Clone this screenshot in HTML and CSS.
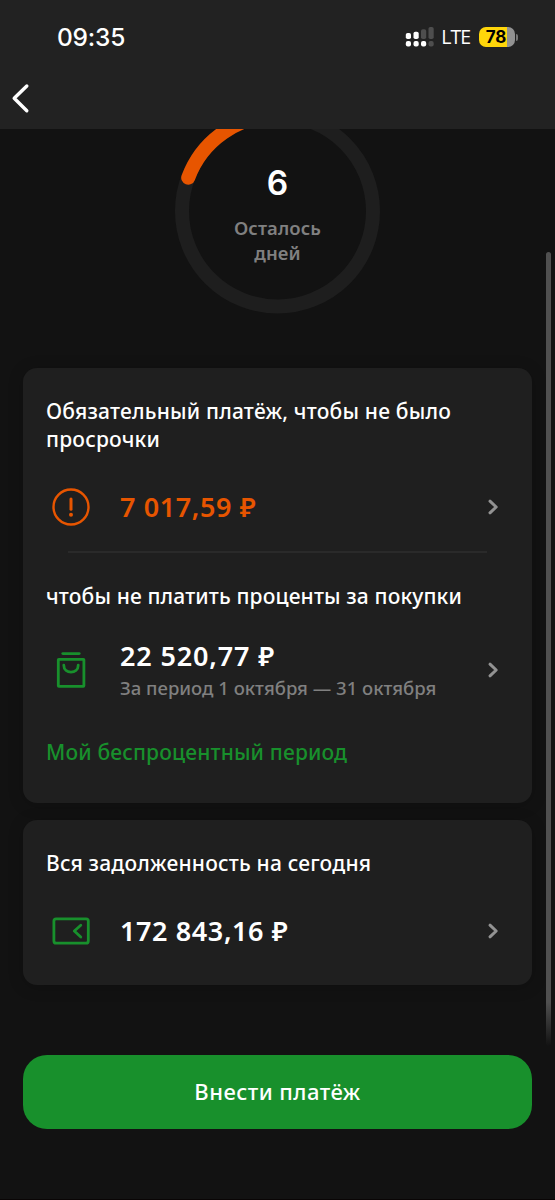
FILE: index.html
```html
<!DOCTYPE html>
<html lang="ru">
<head>
<meta charset="utf-8">
<title>Платёж по кредитной карте</title>
<link rel="stylesheet" href="styles.css">
</head>
<body>
<div class="screen">
  <header class="top">
    <div class="status">
      <span class="clock">09:35</span>
      <div class="indicators">
        <svg class="signal" width="29" height="20" viewBox="0 0 29 20">
          <g fill="#fff"><rect x="0.8" y="6" width="5.2" height="6" rx="1.8"/><rect x="8.5" y="4.7" width="5.2" height="7.3" rx="1.8"/><rect x="0.8" y="14" width="5.2" height="5.4" rx="2"/><rect x="8.5" y="14" width="5.2" height="5.4" rx="2"/><rect x="16" y="14" width="5.2" height="5.4" rx="2"/></g>
          <g fill="#4e4e4e"><rect x="16" y="2.2" width="5.2" height="9.8" rx="1.8"/><rect x="23.5" y="0" width="5.2" height="12" rx="1.8"/><rect x="23.5" y="14" width="5.2" height="5.4" rx="2"/></g>
        </svg>
        <span class="network">LTE</span>
        <span class="battery"><span class="level">78</span></span>
        <span class="battery-tip"></span>
      </div>
    </div>
    <svg class="back" width="20" height="32" viewBox="0 0 20 32"><path d="M15.8 4 3.2 16.3 15.8 28.8" fill="none" stroke="#fff" stroke-width="3.4" stroke-linecap="round" stroke-linejoin="round"/></svg>
  </header>

  <main class="content">
    <section class="dial">
      <svg class="ring" width="205" height="185" viewBox="0 20.5 205 185">
        <circle cx="102.5" cy="102.5" r="95.5" fill="none" stroke="#1e1e1e" stroke-width="14"/>
        <path d="M13.2 69.2A95.5 95.5 0 0 1 102.5 7" fill="none" stroke="#e75500" stroke-width="14" stroke-linecap="round"/>
      </svg>
      <div class="dial-label">
        <strong class="days">6</strong>
        <span class="left w-left">Осталось</span>
        <span class="left w-days">дней</span>
      </div>
    </section>

    <section class="card card-main">
      <h2 class="title"><span class="t1">Обязательный платёж, чтобы не было</span><br><span class="t2">просрочки</span></h2>
      <div class="row row-due">
        <svg class="icon" width="50" height="50" viewBox="0 0 50 50" fill="none" stroke="#e75500"><circle cx="25" cy="25" r="17.5" stroke-width="2.4"/><path d="M25 17V27.2" stroke-width="3" stroke-linecap="round"/><circle cx="25" cy="32.7" r="2" fill="#e75500" stroke="none"/></svg>
        <span class="amount due">7 017,59 ₽</span>
        <svg class="chevron" width="12" height="18" viewBox="0 0 12 18"><path d="M3 3.2 9.2 9 3 14.8" /></svg>
      </div>
      <div class="divider"></div>
      <h2 class="title t3">чтобы не платить проценты за покупки</h2>
      <div class="row row-period">
        <svg class="icon" width="50" height="50" viewBox="0 0 50 50" fill="none" stroke="#18902c" stroke-width="2.8"><path d="M16.8 8.6H33.2" stroke-linecap="round"/><rect x="12.3" y="14.3" width="25.6" height="27" rx="0.5"/><path d="M17.8 20.2C17.8 29.3 32.2 29.3 32.2 20.2" stroke-linecap="round"/></svg>
        <div class="stack">
          <span class="amount total">22 520,77 ₽</span>
          <span class="period">За период 1 октября — 31 октября</span>
        </div>
        <svg class="chevron" width="12" height="18" viewBox="0 0 12 18"><path d="M3 3.2 9.2 9 3 14.8"/></svg>
      </div>
      <a class="link">Мой беспроцентный период</a>
    </section>

    <section class="card card-debt">
      <h2 class="title t4">Вся задолженность на сегодня</h2>
      <div class="row row-debt">
        <svg class="icon" width="50" height="50" viewBox="0 0 50 50" fill="none" stroke="#18902c" stroke-width="2.8"><rect x="7.9" y="12.9" width="34.4" height="24.2" rx="2.2"/><path d="M34.8 19.2 28.3 25 34.8 31" stroke-linecap="round" stroke-linejoin="round"/></svg>
        <span class="amount debt">172 843,16 ₽</span>
        <svg class="chevron" width="12" height="18" viewBox="0 0 12 18"><path d="M3 3.2 9.2 9 3 14.8"/></svg>
      </div>
    </section>

    <button class="pay"><span class="pay-text">Внести платёж</span></button>
  </main>
  <div class="scrollbar"></div>
</div>
</body>
</html>
```
FILE: styles.css
```css
* { box-sizing: border-box; }
body { margin: 0; background: #121212; }
.screen {
  position: relative;
  width: 555px;
  height: 1200px;
  overflow: hidden;
  background: #121212;
  border-bottom: 1px solid #090505;
  color: #fff;
  font-family: "Noto Sans", sans-serif;
}
.top { height: 129px; background: #222; }
.status {
  display: flex;
  justify-content: space-between;
  align-items: center;
  height: 74px;
  padding: 0 37px 0 57px;
}
.clock { font: 500 24.5px/30px Inter, sans-serif; letter-spacing: -.2px; }
.indicators { display: flex; align-items: center; height: 20px; }
.network { margin-left: 7px; font: 500 19.5px/20px "Open Sans", sans-serif; letter-spacing: -1px; }
.battery {
  width: 36px;
  height: 20px;
  margin-left: 9px;
  border-radius: 7px;
  overflow: hidden;
  background: linear-gradient(90deg, #ffd60a 28px, #929292 28px);
}
.level { display: block; width: 34px; color: #000; font: 700 17px/20px Inter, sans-serif; text-align: center; }
.battery-tip { width: 2px; height: 7px; margin-left: 1px; border-radius: 0 3px 3px 0; background: #777; }
.back { display: block; margin: 8px 0 0 11px; }
.content { display: flex; flex-direction: column; padding: 0 23px; }
.dial { display: grid; justify-items: center; height: 185px; }
.ring, .dial-label { grid-area: 1 / 1; }
.dial-label { display: flex; flex-direction: column; align-items: center; padding-top: 30px; }
.days { font: 600 33.5px/48px Inter, sans-serif; }
.left { color: #808080; font-size: 18.5px; line-height: 26px; font-weight: 600; letter-spacing: .1px; }
.w-left { margin-top: 8px; }
.w-days { margin-top: -1px; }
.card {
  border-radius: 14px;
  background: #1f1f1f;
  box-shadow: 0 2px 16px rgba(0, 0, 0, .2);
}
.card-main { height: 435px; margin-top: 54px; padding: 29px 23px 0; }
.card-debt { height: 165px; margin-top: 17px; padding: 29px 23px 0; }
.title { margin: 0; font-size: 21px; line-height: 28px; font-weight: 500; letter-spacing: .2px; white-space: nowrap; }
.t3 { letter-spacing: .14px; }
.row { display: flex; align-items: center; height: 50px; padding-right: 10px; }
.icon { flex: none; }
.chevron { margin-left: auto; fill: none; stroke: #929292; stroke-width: 3; stroke-linecap: round; stroke-linejoin: round; }
.amount { margin-left: 24px; font-size: 27px; line-height: 36px; font-weight: 600; letter-spacing: .6px; white-space: nowrap; }
.due { color: #e75500; }
.row-due { margin-top: 29px; }
.divider { height: 2px; margin: 19px 22px 29px; background: #2a2a2a; }
.row-period { margin-top: 35px; }
.stack { display: flex; flex-direction: column; margin-left: 24px; }
.stack .amount { margin-left: 0; letter-spacing: .85px; }
.period { color: #808080; font-size: 18.5px; line-height: 28px; font-weight: 500; white-space: nowrap; }
.link { display: block; width: max-content; margin-top: 43px; color: #18902c; font-size: 21px; line-height: 28px; font-weight: 500; letter-spacing: .16px; }
.row-debt { margin-top: 29px; }
.pay {
  display: flex;
  align-items: center;
  justify-content: center;
  height: 74px;
  margin-top: 70px;
  padding: 0 0 2px;
  border: 0;
  border-radius: 24px;
  background: #18902c;
  color: #fff;
  font: 500 22px/28px "Noto Sans", sans-serif;
  letter-spacing: .45px;
}
.scrollbar {
  position: absolute;
  right: 4px;
  top: 252px;
  width: 5px;
  height: 794px;
  border-radius: 3px;
  background: linear-gradient(#505050 0, #505050 750px, transparent 100%);
}
```
